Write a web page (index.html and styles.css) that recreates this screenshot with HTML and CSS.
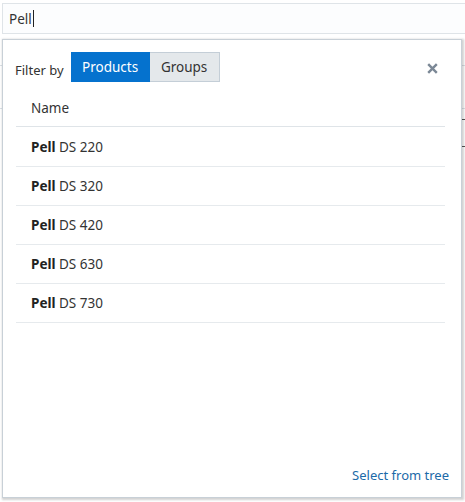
FILE: index.html
```html
<!DOCTYPE html>
<html>
<head>
<meta charset="utf-8">
<link rel="stylesheet" href="styles.css">
</head>
<body>
<div class="page">
  <div class="search"><span class="query">Pell</span><span class="caret"></span></div>
  <div class="behind">
    <div class="bg-line l1"></div>
    <div class="bg-line l2"></div>
    <div class="bg-tick t1"></div>
    <div class="bg-tick t2"></div>
  </div>
  <div class="popup">
    <div class="popup-head">
      <span class="filter-label">Filter by</span>
      <div class="toggle">
        <button class="seg active">Products</button>
        <button class="seg">Groups</button>
      </div>
      <span class="close"><svg width="11" height="11" viewBox="0 0 11 11"><path d="M1.2 1.2 L9.8 9.8 M9.8 1.2 L1.2 9.8" stroke="#7b8896" stroke-width="2.4" stroke-linecap="butt" fill="none"/></svg></span>
    </div>
    <div class="list">
      <div class="list-head">Name</div>
      <div class="row first"><b>Pell</b> DS 220</div>
      <div class="row"><b>Pell</b> DS 320</div>
      <div class="row"><b>Pell</b> DS 420</div>
      <div class="row"><b>Pell</b> DS 630</div>
      <div class="row"><b>Pell</b> DS 730</div>
    </div>
    <div class="popup-foot"><a class="tree-link">Select from tree</a></div>
  </div>
</div>
</body>
</html>
```

FILE: styles.css
```css
html, body {
  margin: 0;
  padding: 0;
  background: #ffffff;
}
body {
  font-family: "Noto Sans", "Open Sans", sans-serif;
  color: #333333;
  width: 465px;
  height: 502px;
  overflow: hidden;
}
.page {
  position: relative;
  width: 465px;
  height: 502px;
  padding-top: 3px;
  box-sizing: border-box;
}
.search {
  margin: 0 0 0 2px;
  height: 31px;
  border: 1px solid #dfe4e8;
  border-right: none;
  background: #fcfdfe;
  display: flex;
  align-items: center;
  padding-left: 6px;
  box-sizing: border-box;
  font-size: 13.5px;
  color: #333;
}
.caret {
  display: inline-block;
  width: 1px;
  height: 17px;
  background: #222;
  margin-left: 1px;
}
.behind {
  position: relative;
  height: 200px;
}
.bg-line {
  position: absolute;
  left: 0;
  right: 0;
  height: 1px;
  background: #dbe1e6;
}
.l1 { top: 31px; }
.l2 { top: 74px; }
.bg-tick {
  position: absolute;
  right: 0;
  width: 6px;
  height: 1px;
  background: #555;
}
.t1 { top: 85px; }
.t2 { top: 112px; }
.popup {
  position: absolute;
  left: 2px;
  top: 39px;
  width: 460px;
  height: 459px;
  box-sizing: border-box;
  background: #ffffff;
  border: 1px solid #c8d0d7;
  box-shadow: 1px 1px 2px 1px rgba(0, 0, 0, 0.18);
  display: flex;
  flex-direction: column;
}
.popup-head {
  display: flex;
  align-items: center;
  padding: 12px 0 0 12px;
  height: 30px;
}
.filter-label {
  font-size: 13px;
  color: #333;
  margin-right: 7px;
  margin-top: 6px;
}
.toggle {
  display: flex;
}
.seg {
  font-family: inherit;
  font-size: 13.5px;
  height: 30px;
  padding: 0;
  border: 1px solid #c4ced7;
  background: #e4e8eb;
  color: #333;
  margin: 0;
  border-radius: 0;
}
.seg.active {
  background: #0572ce;
  border-color: #0572ce;
  color: #ffffff;
  width: 79px;
}
.seg + .seg {
  border-left: none;
  width: 70px;
}
.close {
  margin-left: auto;
  margin-right: 23px;
  display: flex;
  margin-top: 2px;
}
.list {
  margin: 11px 16px 0 13px;
}
.list-head {
  display: flex;
  align-items: center;
  padding-left: 15px;
  padding-bottom: 3px;
  box-sizing: border-box;
  height: 34px;
  font-size: 13.5px;
  border-bottom: 1px solid #dfe4e8;
}
.row {
  height: 39px;
  box-sizing: border-box;
  display: flex;
  align-items: center;
  padding-left: 15px;
  font-size: 13.5px;
  border-bottom: 1px solid #e6eaed;
  white-space: pre;
}
.row.first {
  height: 40px;
}
.row b {
  font-weight: bold;
  color: #222;
}
.popup-foot {
  margin-top: auto;
  display: flex;
  justify-content: flex-end;
  padding: 0 12px 13px 0;
}
.tree-link {
  font-size: 13px;
  color: #1c6aa8;
  cursor: pointer;
}
```
